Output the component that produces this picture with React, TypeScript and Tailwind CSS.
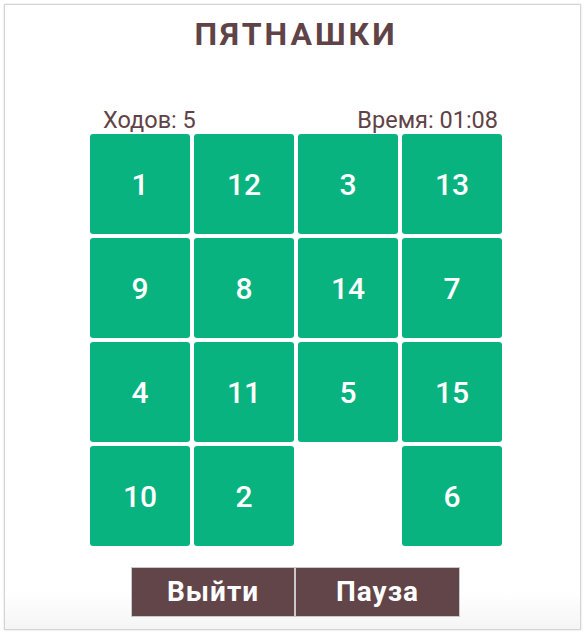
import React from 'react';

const board: (number | null)[] = [1, 12, 3, 13, 9, 8, 14, 7, 4, 11, 5, 15, 10, 2, null, 6];

function App() {
  return (
    <div className="min-h-screen bg-white p-1 font-['Roboto',sans-serif]">
      <div className="h-[626px] w-[577px] border border-[#d4d4d4] shadow-[0_0_2px_rgba(0,0,0,0.15)] flex flex-col">
        <div className="pl-[85px] pt-[10px]">
          <h1 className="w-[412px] text-center text-[32px] leading-[38px] font-bold tracking-[3px] text-[#5f4347]">
            ПЯТНАШКИ
          </h1>

          {/* Stats */}
          <div className="w-[412px] mt-[54px] flex justify-between px-[13px] text-[23.5px] leading-[27px] text-[#5f4347]">
            <span>Ходов: 5</span>
            <span className="-mr-[9px]">Время: 01:08</span>
          </div>

          {/* Board */}
          <div className="w-[412px] grid grid-cols-4 gap-1">
            {board.map((n, i) =>
              n === null ? (
                <div key={i} className="h-[100px]" />
              ) : (
                <Tile key={i} n={n} />
              )
            )}
          </div>
        </div>

        {/* Controls */}
        <div className="mt-[21px] flex-1 bg-gradient-to-b from-white from-[40%] to-[#f5f5f5] flex justify-center pl-[6px]">
          <div className="flex h-[50px] border border-[#c9c9c9]">
            <button className="w-[164px] bg-[#624549] text-white text-[28px] font-bold tracking-[1px] border-r-2 border-[#c9c9c9]">
              Выйти
            </button>
            <button className="w-[163px] bg-[#624549] text-white text-[28px] font-bold tracking-[1px]">
              Пауза
            </button>
          </div>
        </div>
      </div>
    </div>
  );
}

function Tile({ n }: { n: number }) {
  return (
    <div className="h-[100px] rounded-[3px] bg-[#09b37f] flex items-center justify-center text-white text-[30px] font-medium">
      {n}
    </div>
  );
}

export default App;
